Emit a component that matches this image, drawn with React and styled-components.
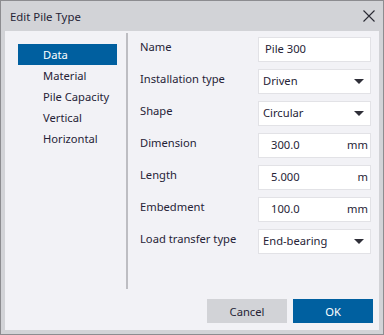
import React from "react";
import styled, { createGlobalStyle } from "styled-components";

const GlobalStyle = createGlobalStyle`
  html, body {
    margin: 0;
    padding: 0;
    background: #ffffff;
  }
  body {
    font-family: "Noto Sans", "Open Sans", sans-serif;
    font-size: 11.2px;
    color: #262336;
  }
`;

// Outer dialog window with grey frame
const Dialog = styled.div`
  width: 384px;
  height: 335px;
  box-sizing: border-box;
  border: 1px solid #8c8c90;
  background: #d2d3d7;
  display: flex;
  flex-direction: column;
`;

const TitleBar = styled.div`
  height: 30px;
  display: flex;
  align-items: center;
  justify-content: space-between;
  padding: 0 8px 0 9px;
  font-size: 11.4px;
`;

const CloseButton = styled.div`
  width: 12px;
  height: 12px;
  display: flex;
`;

const Body = styled.div`
  flex: 1;
  margin: 0 4px 4px;
  background: #f2f2f6;
  display: flex;
  flex-direction: column;
`;

const Main = styled.div`
  flex: 1;
  display: flex;
`;

const Sidebar = styled.ul`
  list-style: none;
  margin: 0;
  padding: 13px 0 0 13px;
  width: 99px;
`;

const NavItem = styled.li`
  height: 21px;
  line-height: 21px;
  padding-left: 25px;
  background: ${(p) => (p.$active ? "#005f9f" : "transparent")};
  color: ${(p) => (p.$active ? "#ffffff" : "#262336")};
`;

const Divider = styled.div`
  width: 2px;
  margin: 2px 0 0 9px;
  background: #bdbdc2;
`;

const Form = styled.div`
  flex: 1;
  display: grid;
  grid-template-columns: 118px 113px;
  grid-auto-rows: 25px;
  row-gap: 7px;
  padding: 6px 7px 0 12px;
  align-content: start;
`;

const Label = styled.div`
  padding-top: 2px;
  line-height: 16px;
`;

const Field = styled.div`
  box-sizing: border-box;
  background: #ffffff;
  border: 1px solid #e2e2e6;
  display: flex;
  align-items: center;
  padding: 0 ${(p) => p.$right || 6}px 1px ${(p) => p.$left || 6}px;
  line-height: 16px;
`;

const Value = styled.span`
  flex: 1;
`;

const Unit = styled.span`
  color: #262336;
`;

const Arrow = styled.svg`
  width: 10px;
  height: 5px;
`;

const Footer = styled.div`
  display: flex;
  justify-content: flex-end;
  gap: 6px;
  padding: 10px 6px 7px;
`;

const Button = styled.div`
  width: 80px;
  height: 24px;
  display: flex;
  align-items: center;
  justify-content: center;
  background: ${(p) => (p.$primary ? "#0060a0" : "#d2d3d7")};
  color: ${(p) => (p.$primary ? "#ffffff" : "#262336")};
`;

const navItems = ["Data", "Material", "Pile Capacity", "Vertical", "Horizontal"];

const rows = [
  { label: "Name", kind: "text", value: "Pile 300" },
  { label: "Installation type", kind: "select", value: "Driven" },
  { label: "Shape", kind: "select", value: "Circular" },
  { label: "Dimension", kind: "number", value: "300.0", unit: "mm" },
  { label: "Length", kind: "number", value: "5.000", unit: "m" },
  { label: "Embedment", kind: "number", value: "100.0", unit: "mm" },
  { label: "Load transfer type", kind: "select", value: "End-bearing" },
];

const renderField = (row) => {
  if (row.kind === "select") {
    return (
      <Field $left={4} $right={6}>
        <Value>{row.value}</Value>
        <Arrow viewBox="0 0 10 5">
          <polygon points="0,0 10,0 5,5" fill="#2f2f38" />
        </Arrow>
      </Field>
    );
  }
  if (row.kind === "number") {
    return (
      <Field $left={12} $right={2}>
        <Value>{row.value}</Value>
        <Unit>{row.unit}</Unit>
      </Field>
    );
  }
  return (
    <Field $left={6}>
      <Value>{row.value}</Value>
    </Field>
  );
};

export default function App() {
  return (
    <>
      <GlobalStyle />
      <Dialog>
        <TitleBar>
          <span>Edit Pile Type</span>
          <CloseButton>
            <svg width="12" height="12" viewBox="0 0 12 12">
              <path d="M0.5 0.5 L11.5 11.5 M11.5 0.5 L0.5 11.5" stroke="#2a2a33" strokeWidth="1.1" fill="none" />
            </svg>
          </CloseButton>
        </TitleBar>
        <Body>
          <Main>
            <Sidebar>
              {navItems.map((item, i) => (
                <NavItem key={item} $active={i === 0}>
                  {item}
                </NavItem>
              ))}
            </Sidebar>
            <Divider />
            <Form>
              {rows.map((row) => (
                <React.Fragment key={row.label}>
                  <Label>{row.label}</Label>
                  {renderField(row)}
                </React.Fragment>
              ))}
            </Form>
          </Main>
          <Footer>
            <Button>Cancel</Button>
            <Button $primary>OK</Button>
          </Footer>
        </Body>
      </Dialog>
    </>
  );
}
